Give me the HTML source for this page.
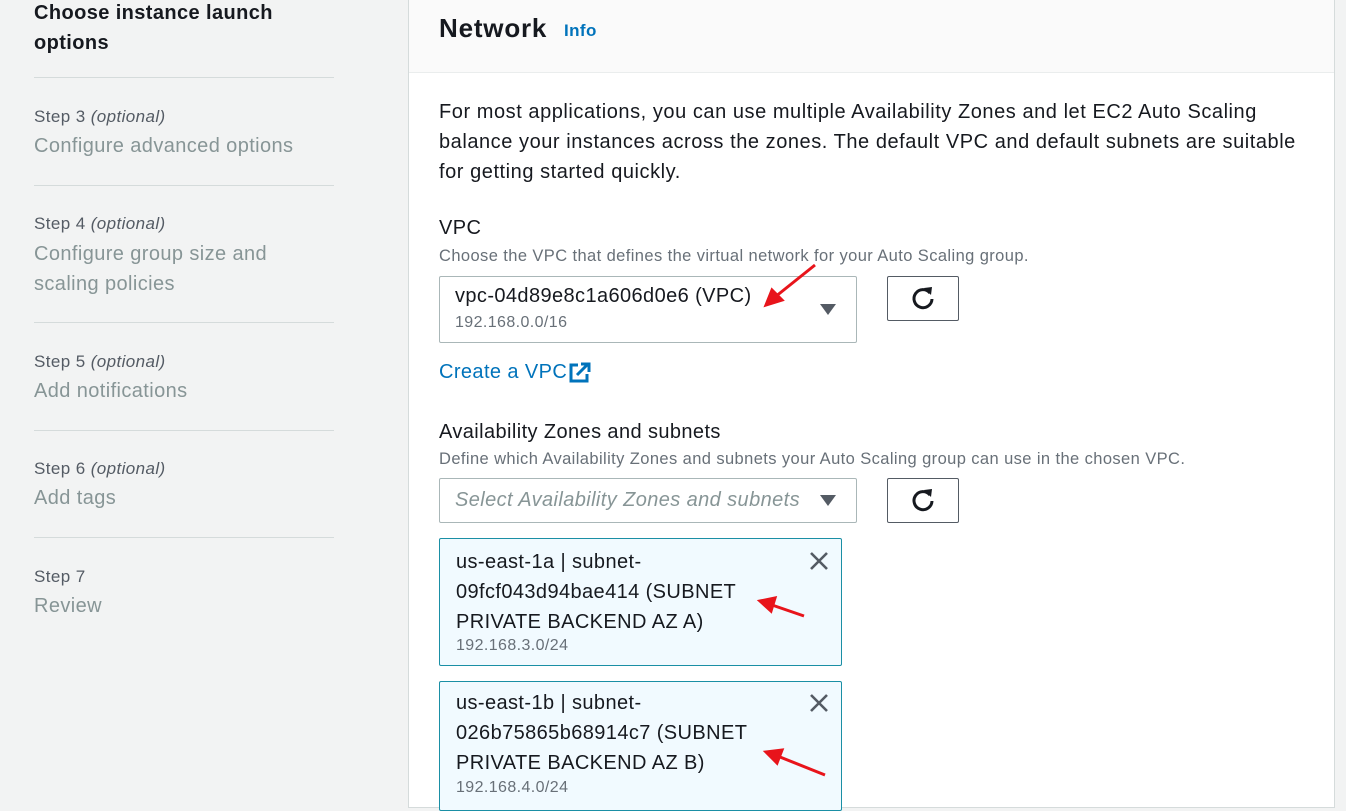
<!DOCTYPE html>
<html><head><meta charset="utf-8"><style>
*{margin:0;padding:0;box-sizing:border-box}
body{width:1346px;height:798px;overflow:hidden;background:#f2f3f3;font-family:"Liberation Sans",Arial,sans-serif;color:#16191f;position:relative;letter-spacing:0.4px}
.a{position:absolute;white-space:nowrap}
.side .step{font-size:17px;color:#545b64}
.side .t{font-size:20px;color:#879596}
.hr{position:absolute;left:34px;width:300px;height:1px;background:#d5dbdb}
.panel{position:absolute;left:408px;top:-2px;width:927px;height:810px;background:#fff;border:1px solid #d5dbdb}
.hdr{position:absolute;left:0;top:0;width:925px;height:74px;background:#fafafa;border-bottom:1px solid #eaeded}
.sel{position:absolute;border:1px solid #aab7b8;border-radius:2px;background:#fff}
.btn{position:absolute;border:1px solid #545b64;border-radius:2px;background:#fff;width:72px;height:45px}
.tok{position:absolute;left:439px;width:403px;background:#f1faff;border:1px solid #1a8fa5;border-radius:2px}
.tok .l{position:absolute;left:16px;font-size:20px;color:#16191f}
.tok .s{position:absolute;left:16px;font-size:16px;color:#687078}
.tri{position:absolute;width:0;height:0;border-left:8px solid transparent;border-right:8px solid transparent;border-top:11px solid #545b64}
</style></head><body>
<div class="side">
<div class="a" style="left:34px;top:-2px;font-size:20px;font-weight:bold;line-height:30px;white-space:normal;width:320px">Choose instance launch<br>options</div>
<div class="hr" style="top:77px"></div>
<div class="a step" style="left:34px;top:107px">Step 3 <i>(optional)</i></div>
<div class="a t" style="left:34px;top:135px">Configure advanced options</div>
<div class="hr" style="top:185px"></div>
<div class="a step" style="left:34px;top:214px">Step 4 <i>(optional)</i></div>
<div class="a t" style="left:34px;top:239px;line-height:30px">Configure group size and<br>scaling policies</div>
<div class="hr" style="top:322px"></div>
<div class="a step" style="left:34px;top:352px">Step 5 <i>(optional)</i></div>
<div class="a t" style="left:34px;top:380px">Add notifications</div>
<div class="hr" style="top:430px"></div>
<div class="a step" style="left:34px;top:459px">Step 6 <i>(optional)</i></div>
<div class="a t" style="left:34px;top:487px">Add tags</div>
<div class="hr" style="top:537px"></div>
<div class="a step" style="left:34px;top:567px">Step 7</div>
<div class="a t" style="left:34px;top:595px">Review</div>
</div>
<div class="panel"><div class="hdr"></div></div>
<div class="a" style="left:439px;top:13px;font-size:26px;font-weight:bold;letter-spacing:0.8px">Network</div>
<div class="a" style="left:564px;top:21px;font-size:17px;font-weight:bold;color:#0073bb">Info</div>
<div class="a" style="left:439px;top:97px;font-size:20px;line-height:30px;letter-spacing:0.55px">For most applications, you can use multiple Availability Zones and let EC2 Auto Scaling<br>balance your instances across the zones. The default VPC and default subnets are suitable<br>for getting started quickly.</div>
<div class="a" style="left:439px;top:217px;font-size:20px">VPC</div>
<div class="a" style="left:439px;top:247px;font-size:16.5px;color:#687078">Choose the VPC that defines the virtual network for your Auto Scaling group.</div>
<div class="sel" style="left:439px;top:276px;width:418px;height:67px"></div>
<div class="a" style="left:455px;top:285px;font-size:20px">vpc-04d89e8c1a606d0e6 (VPC)</div>
<div class="a" style="left:455px;top:314px;font-size:16px;color:#687078">192.168.0.0/16</div>
<div class="tri" style="left:820px;top:304px"></div>
<div class="btn" style="left:887px;top:276px"></div>
<div class="btn" style="left:887px;top:478px"></div>
<svg class="a" style="left:910px;top:285px" width="26" height="26" viewBox="0 0 26 26"><path d="M20 8A9 9 0 1 0 22 14" fill="none" stroke="#16191f" stroke-width="3"/><path d="M14 3L22 2L21 10Z" fill="#16191f"/></svg>
<svg class="a" style="left:910px;top:487px" width="26" height="26" viewBox="0 0 26 26"><path d="M20 8A9 9 0 1 0 22 14" fill="none" stroke="#16191f" stroke-width="3"/><path d="M14 3L22 2L21 10Z" fill="#16191f"/></svg>
<div class="a" style="left:439px;top:361px;font-size:20px;color:#0073bb">Create a VPC</div>
<svg class="a" style="left:568px;top:362px" width="24" height="22" viewBox="0 0 24 22"><path d="M10 3H3V19H19V12" fill="none" stroke="#0073bb" stroke-width="3"/><path d="M9 13L20 2M13 2H21V10" fill="none" stroke="#0073bb" stroke-width="3"/></svg>
<div class="a" style="left:439px;top:421px;font-size:20px">Availability Zones and subnets</div>
<div class="a" style="left:439px;top:450px;font-size:16.5px;color:#687078">Define which Availability Zones and subnets your Auto Scaling group can use in the chosen VPC.</div>
<div class="sel" style="left:439px;top:478px;width:418px;height:45px"></div>
<div class="a" style="left:455px;top:489px;font-size:20px;font-style:italic;color:#879596">Select Availability Zones and subnets</div>
<div class="tri" style="left:820px;top:495px"></div>
<div class="tok" style="top:538px;height:128px">
<div class="l" style="top:8px;line-height:30px">us-east-1a | subnet-<br>09fcf043d94bae414 (SUBNET<br>PRIVATE BACKEND AZ A)</div>
<div class="s" style="top:98px">192.168.3.0/24</div></div>
<div class="tok" style="top:681px;height:130px">
<div class="l" style="top:6px;line-height:30px">us-east-1b | subnet-<br>026b75865b68914c7 (SUBNET<br>PRIVATE BACKEND AZ B)</div>
<div class="s" style="top:97px">192.168.4.0/24</div></div>
<svg class="a" style="left:808px;top:550px" width="22" height="22"><path d="M3 3L19 19M19 3L3 19" stroke="#545b64" stroke-width="2.6"/></svg>
<svg class="a" style="left:808px;top:692px" width="22" height="22"><path d="M3 3L19 19M19 3L3 19" stroke="#545b64" stroke-width="2.6"/></svg>
<svg class="a" style="left:0;top:0" width="1346" height="798"><g stroke="#e8141b" stroke-width="3" fill="#e8141b">
<line x1="815" y1="265" x2="775" y2="297"/><path d="M766 305L772 290L782 300Z"/>
<line x1="804" y1="616" x2="772" y2="605"/><path d="M760 601L775 598L771 611Z"/>
<line x1="825" y1="775" x2="780" y2="757"/><path d="M766 752L782 750L777 763Z"/>
</g></svg>
</body></html>
